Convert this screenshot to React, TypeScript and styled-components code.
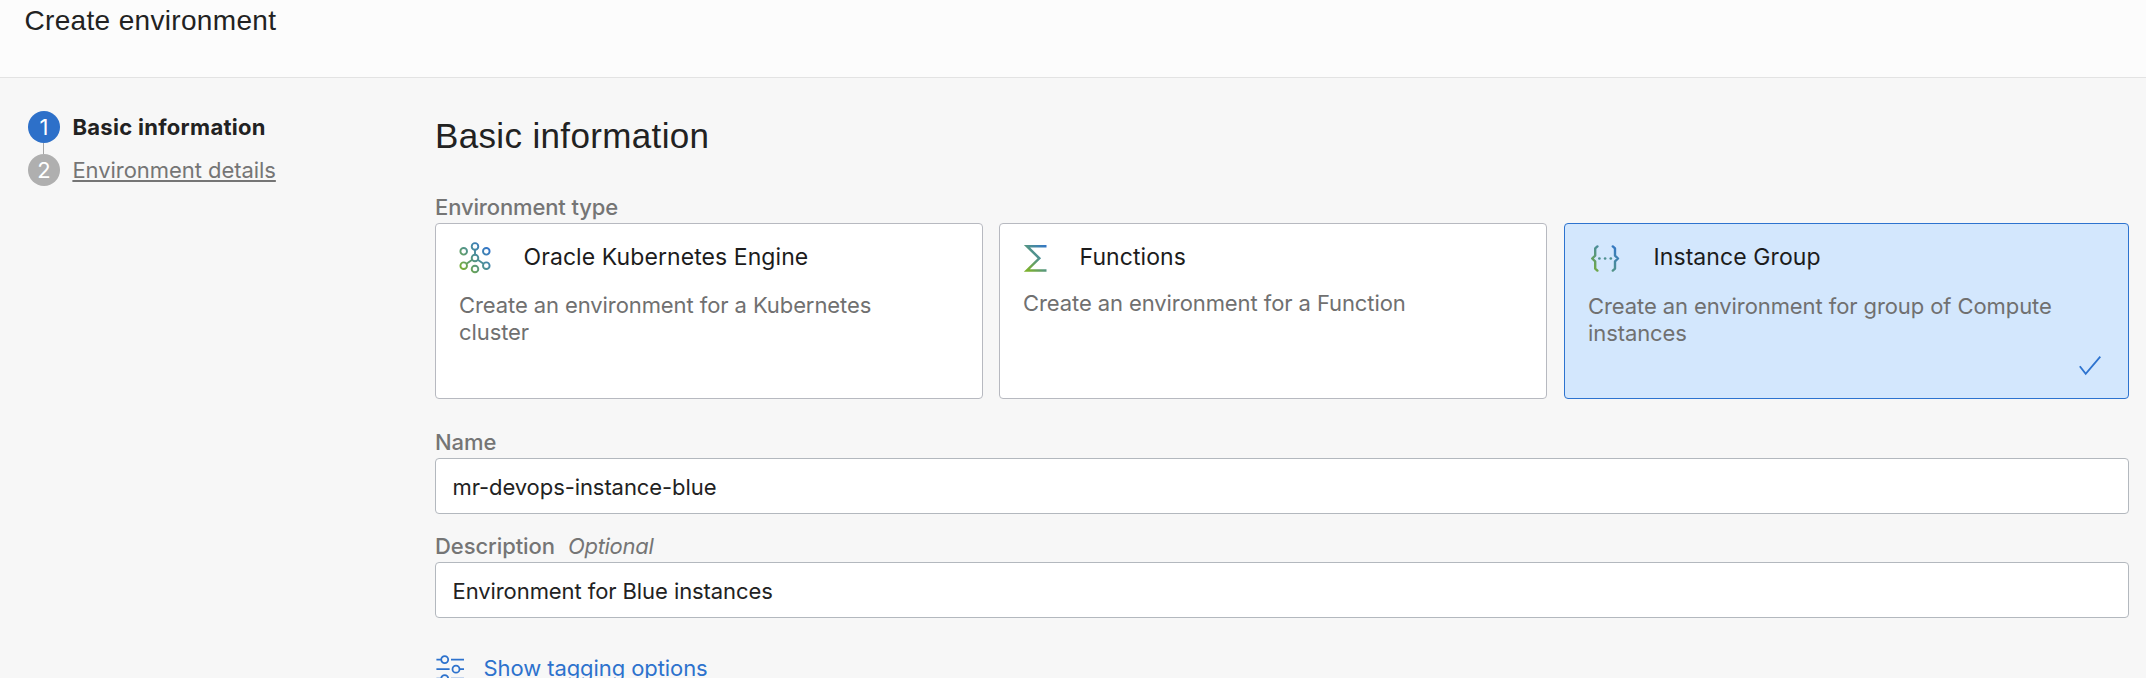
import React from 'react';
import styled, { createGlobalStyle } from 'styled-components';

const sans = `Inter, "Liberation Sans", sans-serif`;
const display = `"Liberation Sans", Arial, sans-serif`;

const GlobalStyle = createGlobalStyle`
  *, *::before, *::after { box-sizing: border-box; }
  html, body { margin: 0; background: #f7f7f7; overflow: hidden; }
  body { font: 400 22px/28px ${sans}; letter-spacing: -0.08px; color: #222; }
`;

const Page = styled.div`
  height: 678px;
  overflow: hidden;
  display: flex;
  flex-direction: column;
`;

const Header = styled.header`
  flex: none;
  height: 78px;
  padding: 5px 24.5px 0;
  background: #fcfcfc;
  border-bottom: 1px solid #e3e3e3;
`;

const PageTitle = styled.h1`
  margin: 0;
  font: 400 28px/31px ${display};
  letter-spacing: 0.33px;
`;

const Body = styled.div`
  flex: 1;
  display: grid;
  grid-template-columns: 407px 1694px;
  padding-left: 28px;
`;

const Steps = styled.ol`
  margin: 0;
  padding: 33px 0 0;
  list-style: none;
`;

const Step = styled.li`
  display: flex;
  align-items: center;
  gap: 12.4px;
`;

const Connector = styled.li`
  width: 1px;
  height: 11px;
  margin-left: 15px;
  background: #a5a5a5;
`;

const StepBadge = styled.span<{ $active?: boolean }>`
  width: 32px;
  height: 32px;
  border-radius: 50%;
  display: flex;
  align-items: center;
  justify-content: center;
  color: #fff;
  background: ${(p) => (p.$active ? '#2d70c9' : '#afafaf')};
`;

const StepLabel = styled.span<{ $active?: boolean }>`
  font-weight: ${(p) => (p.$active ? 700 : 400)};
  letter-spacing: ${(p) => (p.$active ? '0.3px' : '-0.05px')};
  color: ${(p) => (p.$active ? '#222' : '#757575')};
  text-decoration: ${(p) => (p.$active ? 'none' : 'underline')};
  text-decoration-thickness: 2px;
  text-underline-offset: 2px;
`;

const Form = styled.main`
  padding-top: 38px;
`;

const SectionTitle = styled.h2`
  margin: 0;
  font: 400 35px/39px ${display};
  letter-spacing: 0.35px;
`;

const TypeLabel = styled.div`
  margin-top: 38px;
  height: 30px;
  font-weight: 500;
  letter-spacing: -0.13px;
  color: #757575;
`;

const Cards = styled.div`
  display: flex;
  gap: 16px;
  height: 176px;
`;

const Card = styled.div<{ $selected?: boolean }>`
  display: flex;
  flex-direction: column;
  width: ${(p) => (p.$selected ? 565 : 548)}px;
  margin-left: ${(p) => (p.$selected ? 'auto' : 0)};
  padding: 18px 27px 22px 23px;
  border: 1px solid ${(p) => (p.$selected ? '#2d73cf' : '#b7b9c0')};
  border-radius: 4px;
  background: ${(p) => (p.$selected ? '#d3e7fd' : '#fff')};
`;

const CardHead = styled.div`
  display: flex;
  align-items: flex-start;
  gap: 32.5px;

  svg { flex: none; display: block; }
`;

const CardTitle = styled.span`
  margin-top: 1px;
  font-size: 23px;
  letter-spacing: 0.08px;
  color: #1c1c1c;
`;

const CardText = styled.p`
  margin: 18px 24px 0 0;
  line-height: 27px;
  letter-spacing: -0.09px;
  color: #707070;
`;

const Check = styled.svg`
  align-self: flex-end;
  margin-top: auto;
`;

const Label = styled.label<{ $top: number }>`
  display: flex;
  gap: 13px;
  height: 30px;
  margin-top: ${(p) => p.$top}px;
  font-weight: 500;
  color: #757575;
`;

const Optional = styled.em`
  font-weight: 400;
  letter-spacing: -0.3px;
`;

const Input = styled.input`
  display: block;
  width: 100%;
  height: 56px;
  padding: 2px 16.5px 0;
  border: 1px solid #b3b8be;
  border-radius: 4px;
  background: #fff;
  font: inherit;
  letter-spacing: -0.08px;
  color: #222;
  outline: none;
`;

const TagLink = styled.a`
  display: flex;
  gap: 18.5px;
  margin-top: 36px;
  color: #2d72cd;
  letter-spacing: -0.08px;

  svg { flex: none; }
`;

const Gradient = ({ id, size }: { id: string; size: number }) => (
  <linearGradient id={id} gradientUnits="userSpaceOnUse" x1="2" y1={size - 4} x2={size - 2} y2="4">
    <stop offset="0" stopColor="#7bb030" />
    <stop offset="0.5" stopColor="#4f9190" />
    <stop offset="1" stopColor="#2f72cf" />
  </linearGradient>
);

const ClusterIcon = () => (
  <svg width="32" height="32" viewBox="0 0 32 32" fill="none" stroke="url(#g-cluster)" strokeWidth="1.9">
    <defs><Gradient id="g-cluster" size={32} /></defs>
    {[[4.7, 9.3], [16, 4.4], [27.3, 9.3], [16, 16], [4.7, 23.7], [27.3, 23.7], [16, 27]].map(([x, y]) => (
      <circle key={`${x}-${y}`} cx={x} cy={y} r="3.3" />
    ))}
    <path d="M15.99 7.7L16.01 12.7M13.2 17.8L7.5 21.8M18.8 17.8L24.5 21.8" />
  </svg>
);

const SigmaIcon = () => (
  <svg width="24" height="30" viewBox="0 0 24 30" fill="none" stroke="url(#g-sigma)" strokeWidth="2.5">
    <defs><Gradient id="g-sigma" size={28} /></defs>
    <path d="M23.5 4.2H3.9L16.3 16.3L3.9 28.4H23.5" strokeMiterlimit="10" />
  </svg>
);

const BracesIcon = () => (
  <svg width="33" height="33" viewBox="0 0 33 33" fill="none" stroke="url(#g-braces)" strokeWidth="2.4" strokeLinecap="round" strokeLinejoin="round">
    <defs><Gradient id="g-braces" size={33} /></defs>
    <path d="M9.4 4.4L7.2 6.4V13.6L4.2 16.5L7.2 19.4V26.6L9.4 28.6" />
    <path d="M24.8 4.4L27 6.4V13.6L30 16.5L27 19.4V26.6L24.8 28.6" />
    <g stroke="none" fill="#4f9190">
      <circle cx="11.4" cy="16.5" r="1.35" />
      <circle cx="17.1" cy="16.5" r="1.35" />
      <circle cx="22.8" cy="16.5" r="1.35" />
    </g>
  </svg>
);

const SlidersIcon = () => (
  <svg width="30" height="32" viewBox="0 0 30 32" fill="none" stroke="currentColor" strokeWidth="1.8">
    <path d="M1.4 5.6H5.9M16 5.6H29M1.4 15.2H14.6M25 15.2H29M1.4 24.7H5.9M16 24.7H29" />
    <circle cx="9.7" cy="5.6" r="3.5" />
    <circle cx="21" cy="15.2" r="3.5" />
    <circle cx="9.7" cy="24.7" r="3.5" />
  </svg>
);

const types = [
  { title: 'Oracle Kubernetes Engine', text: 'Create an environment for a Kubernetes cluster', Icon: ClusterIcon },
  { title: 'Functions', text: 'Create an environment for a Function', Icon: SigmaIcon },
  { title: 'Instance Group', text: 'Create an environment for group of Compute instances', Icon: BracesIcon, selected: true },
];

export default function App() {
  return (
    <Page>
      <GlobalStyle />
      <Header><PageTitle>Create environment</PageTitle></Header>
      <Body>
        <Steps>
          <Step><StepBadge $active>1</StepBadge><StepLabel $active>Basic information</StepLabel></Step>
          <Connector aria-hidden />
          <Step><StepBadge>2</StepBadge><StepLabel>Environment details</StepLabel></Step>
        </Steps>
        <Form>
          <SectionTitle>Basic information</SectionTitle>
          <TypeLabel>Environment type</TypeLabel>
          <Cards>
            {types.map(({ title, text, Icon, selected }) => (
              <Card key={title} $selected={selected}>
                <CardHead><Icon /><CardTitle>{title}</CardTitle></CardHead>
                <CardText>{text}</CardText>
                {selected && (
                  <Check width="22" height="20" viewBox="0 0 22 20" fill="none" stroke="#2d73cf" strokeWidth="1.8">
                    <path d="M0.8 10.2L6.7 17.8L21.3 0.6" />
                  </Check>
                )}
              </Card>
            ))}
          </Cards>
          <Label htmlFor="name" $top={29}>Name</Label>
          <Input id="name" defaultValue="mr-devops-instance-blue" spellCheck={false} />
          <Label htmlFor="description" $top={18}>Description <Optional>Optional</Optional></Label>
          <Input id="description" defaultValue="Environment for Blue instances" spellCheck={false} />
          <TagLink><SlidersIcon />Show tagging options</TagLink>
        </Form>
      </Body>
    </Page>
  );
}
